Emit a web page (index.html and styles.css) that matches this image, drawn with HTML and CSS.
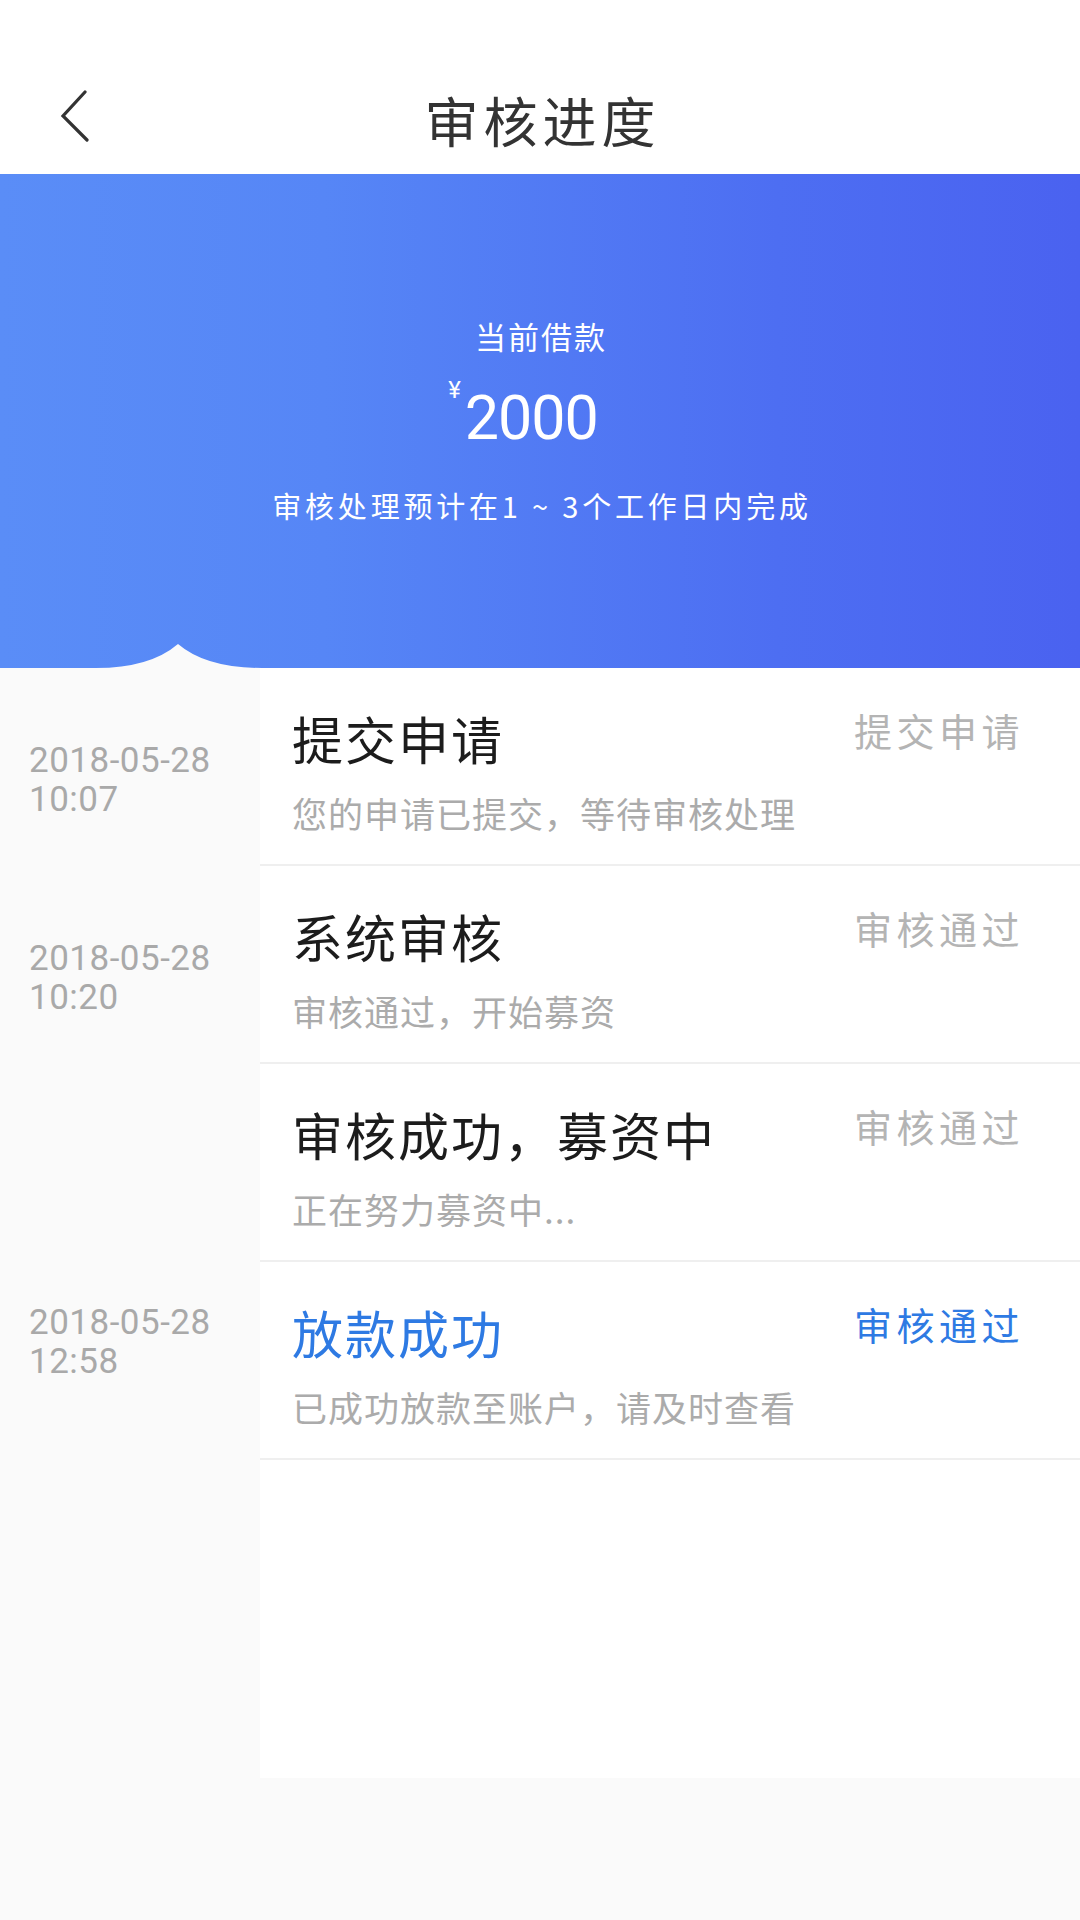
FILE: index.html
```html
<!DOCTYPE html>
<html lang="zh-CN">
<head>
<meta charset="utf-8">
<title>审核进度</title>
<link rel="stylesheet" href="styles.css">
</head>
<body>
<header class="nav">
  <div class="nav-left">
    <svg class="back" width="30" height="52" viewBox="0 0 30 52"><polyline points="25,2 3,26 27,50" fill="none" stroke="#333" stroke-width="3.2" stroke-linecap="round" stroke-linejoin="miter"/></svg>
  </div>
  <h1 class="nav-title">审核进度</h1>
  <div class="nav-right"></div>
</header>

<section class="banner">
  <div class="banner-label">当前借款</div>
  <div class="amount"><span class="currency">¥</span><span class="value">2000</span></div>
  <div class="banner-note">审核处理预计在1 ~ 3个工作日内完成</div>
  <svg class="wave" width="360" height="26" viewBox="0 0 360 26"><path d="M96 26 Q150 26 178 2 Q206 26 262 26 Z" fill="#fafafa"/></svg>
</section>

<main class="timeline">
  <div class="row">
    <div class="date"><div>2018-05-28</div><div>10:07</div></div>
    <div class="event">
      <div class="event-main">
        <div class="event-title">提交申请</div>
        <div class="event-desc">您的申请已提交，等待审核处理</div>
      </div>
      <div class="event-status">提交申请</div>
    </div>
  </div>
  <div class="row">
    <div class="date"><div>2018-05-28</div><div>10:20</div></div>
    <div class="event">
      <div class="event-main">
        <div class="event-title">系统审核</div>
        <div class="event-desc">审核通过，开始募资</div>
      </div>
      <div class="event-status">审核通过</div>
    </div>
  </div>
  <div class="row">
    <div class="date"></div>
    <div class="event">
      <div class="event-main">
        <div class="event-title">审核成功，募资中</div>
        <div class="event-desc">正在努力募资中...</div>
      </div>
      <div class="event-status">审核通过</div>
    </div>
  </div>
  <div class="row">
    <div class="date date-high"><div>2018-05-28</div><div>12:58</div></div>
    <div class="event">
      <div class="event-main">
        <div class="event-title active">放款成功</div>
        <div class="event-desc">已成功放款至账户，请及时查看</div>
      </div>
      <div class="event-status active">审核通过</div>
    </div>
  </div>
  <div class="row filler">
    <div class="date"></div>
    <div class="event empty"></div>
  </div>
</main>
</body>
</html>
```

FILE: styles.css
```css
* { box-sizing: border-box; }

html, body {
  margin: 0;
  padding: 0;
}

body {
  width: 1080px;
  min-height: 1920px;
  background: #fafafa;
  font-family: "Noto Sans CJK SC", "Noto Sans", sans-serif;
  color: #222;
}

.nav {
  height: 174px;
  padding-top: 66px;
  background: #fff;
  display: grid;
  grid-template-columns: 1fr auto 1fr;
  align-items: center;
}

.nav-left {
  padding-left: 60px;
  display: flex;
  align-items: center;
  height: 108px;
}

.back {
  display: block;
  margin-bottom: 8px;
}

.nav-title {
  margin: 0;
  font-size: 54px;
  line-height: 60px;
  font-weight: 400;
  color: #333;
  letter-spacing: 5px;
  padding-left: 5px;
}

.banner {
  position: relative;
  height: 494px;
  background: linear-gradient(90deg, #5a8df7 0%, #5686f6 30%, #4d6ef2 72%, #4a62f0 100%);
  color: #fff;
  display: flex;
  flex-direction: column;
  align-items: center;
  padding-top: 142px;
}

.banner-label {
  font-size: 31px;
  line-height: 40px;
  letter-spacing: 2px;
  padding-left: 2px;
}

.amount {
  margin-top: 22px;
  display: flex;
  align-items: flex-start;
  height: 80px;
  padding-right: 34px;
}

.currency {
  font-family: Roboto, "Noto Sans", sans-serif;
  font-size: 24px;
  line-height: 24px;
  margin-right: 4px;
}

.value {
  font-family: Roboto, "Noto Sans", sans-serif;
  font-size: 61px;
  line-height: 80px;
  letter-spacing: -1px;
}

.banner-note {
  margin-top: 27px;
  font-size: 29px;
  line-height: 40px;
  letter-spacing: 3.8px;
  padding-left: 4px;
}

.wave {
  position: absolute;
  left: 0;
  bottom: 0;
  display: block;
}

.timeline {
  display: flex;
  flex-direction: column;
}

.row {
  display: grid;
  grid-template-columns: 260px 1fr;
  height: 198px;
}

.date {
  background: #fafafa;
  padding-left: 29px;
  padding-top: 73px;
  font-family: Roboto, "Noto Sans", sans-serif;
  font-size: 35px;
  line-height: 39px;
  letter-spacing: 0.5px;
  color: #a9a9a9;
}

.date-high {
  padding-top: 41px;
}

.event {
  background: #fff;
  border-bottom: 2px solid #efefef;
  display: flex;
  justify-content: space-between;
  align-items: flex-start;
  padding: 40px 56px 0 32px;
}

.event-title {
  font-size: 51px;
  line-height: 60px;
  letter-spacing: 2px;
  color: #1c1c1c;
}

.event-desc {
  margin-top: 23px;
  font-size: 35px;
  line-height: 44px;
  letter-spacing: 1px;
  color: #ababab;
}

.event-status {
  font-size: 38px;
  line-height: 44px;
  letter-spacing: 4.5px;
  color: #b4b4b4;
}

.active {
  color: #2e7ae3;
}

.filler {
  height: 318px;
}

.event.empty {
  border-bottom: none;
}
```
